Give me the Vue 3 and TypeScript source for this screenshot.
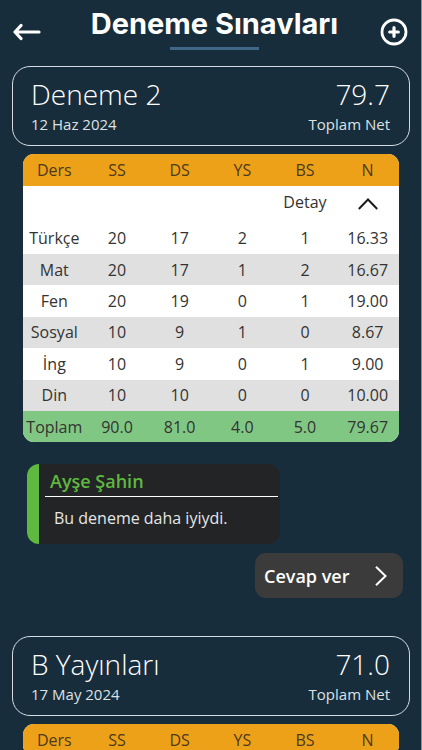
<script setup lang="ts">
import { ref } from 'vue'

interface Exam {
  id: number
  name: string
  date: string
  net: string
  rows: string[][]
  total: string[]
  comment?: { author: string; text: string }
}

const columns = ['Ders', 'SS', 'DS', 'YS', 'BS', 'N']

const exams: Exam[] = [
  {
    id: 1,
    name: 'Deneme 2',
    date: '12 Haz 2024',
    net: '79.7',
    rows: [
      ['Türkçe', '20', '17', '2', '1', '16.33'],
      ['Mat', '20', '17', '1', '2', '16.67'],
      ['Fen', '20', '19', '0', '1', '19.00'],
      ['Sosyal', '10', '9', '1', '0', '8.67'],
      ['İng', '10', '9', '0', '1', '9.00'],
      ['Din', '10', '10', '0', '0', '10.00'],
    ],
    total: ['Toplam', '90.0', '81.0', '4.0', '5.0', '79.67'],
    comment: { author: 'Ayşe Şahin', text: 'Bu deneme daha iyiydi.' },
  },
  { id: 2, name: 'B Yayınları', date: '17 May 2024', net: '71.0', rows: [], total: [] },
]

const open = ref(true)
</script>

<template>
  <div class="screen">
    <header class="bar">
      <button class="icon-button" type="button" aria-label="Geri">
        <svg width="28" height="18" viewBox="0 0 28 18" fill="none" stroke="#fff" stroke-width="3.200" stroke-linecap="round" stroke-linejoin="round">
          <path d="M26 9H2.500M8 2.500L2 9l6 6.500" />
        </svg>
      </button>
      <h1 class="title">Deneme Sınavları</h1>
      <button class="icon-button end" type="button" aria-label="Ekle">
        <svg width="28" height="28" viewBox="0 0 28 28" fill="none" stroke="#fff" stroke-linecap="round">
          <circle cx="14" cy="14" r="12" stroke-width="2.800" />
          <path d="M14 9.700v8.600M9.700 14h8.600" stroke-width="3.200" />
        </svg>
      </button>
    </header>

    <main class="list">
      <article v-for="exam in exams" :key="exam.id" class="exam">
        <section class="card">
          <div>
            <h2 class="big">{{ exam.name }}</h2>
            <p class="small">{{ exam.date }}</p>
          </div>
          <div class="right">
            <p class="big">{{ exam.net }}</p>
            <p class="small">Toplam Net</p>
          </div>
        </section>

        <div class="table-wrap">
          <table class="results" :class="{ full: exam.rows.length && open }">
            <thead>
              <tr>
                <th v-for="c in columns" :key="c" scope="col">{{ c }}</th>
              </tr>
            </thead>
            <tbody v-if="exam.rows.length">
              <tr class="detail">
                <td colspan="4"></td>
                <td>Detay</td>
                <td>
                  <button class="toggle" type="button" aria-label="Detay" :aria-expanded="open" @click="open = !open">
                    <svg width="20" height="12" viewBox="0 0 20 12" fill="none" stroke="#1c1c1c" stroke-width="2">
                      <path :d="open ? 'M.8 11L10 1.500 19.200 11' : 'M.8 1L10 10.500 19.200 1'" />
                    </svg>
                  </button>
                </td>
              </tr>
              <template v-if="open">
                <tr v-for="(row, i) in exam.rows" :key="row[0]" :class="{ shaded: i % 2 === 1 }">
                  <td v-for="(cell, j) in row" :key="j">{{ cell }}</td>
                </tr>
              </template>
            </tbody>
            <tfoot v-if="exam.total.length">
              <tr>
                <td v-for="(cell, j) in exam.total" :key="j">{{ cell }}</td>
              </tr>
            </tfoot>
          </table>
        </div>

        <template v-if="exam.comment">
          <section class="comment">
            <h3 class="author">{{ exam.comment.author }}</h3>
            <p class="message">{{ exam.comment.text }}</p>
          </section>
          <button class="reply" type="button">
            <span>Cevap ver</span>
            <svg width="12" height="20" viewBox="0 0 12 20" fill="none" stroke="#fff" stroke-width="2">
              <path d="M1 .8L10.500 10 1 19.200" />
            </svg>
          </button>
        </template>
      </article>
    </main>
  </div>
</template>

<style>
body {
  background: #182d3b;
}
</style>

<style scoped>
.screen {
  box-sizing: border-box;
  height: 100vh;
  display: flex;
  flex-direction: column;
  border-right: 1px solid #7d93a6;
  background: #182d3b;
  color: #fff;
  font-family: "Open Sans", "Noto Sans", sans-serif;
}
h1, h2, h3, p {
  margin: 0;
}
button {
  font: inherit;
  color: inherit;
  border: 0;
  padding: 0;
  background: none;
  cursor: pointer;
}
.bar {
  display: grid;
  grid-template-columns: 56px 1fr 48px;
  height: 66px;
  padding: 0 13px;
  box-sizing: border-box;
  flex-shrink: 0;
}
.icon-button {
  display: flex;
  align-items: center;
  height: 64px;
}
.end {
  justify-content: flex-end;
}
.title {
  display: flex;
  flex-direction: column;
  align-items: center;
  font-family: Inter, "Open Sans", sans-serif;
  font-size: 29px;
  font-weight: 700;
  line-height: 47px;
  white-space: nowrap;
}
.title::after {
  content: "";
  width: 89px;
  height: 3px;
  background: #406688;
}
.list {
  flex: 1;
  min-height: 0;
  overflow-y: auto;
  scrollbar-width: none;
}
.exam {
  display: flex;
  flex-direction: column;
  padding: 0 11px 38px 12px;
}
.card {
  display: flex;
  justify-content: space-between;
  box-sizing: border-box;
  height: 80px;
  padding: 9px 19px 0 18px;
  border: 1px solid #d5dde3;
  border-radius: 18px;
}
.right {
  text-align: right;
}
.big {
  font-size: 28px;
  font-weight: 300;
  line-height: 37px;
}
.small {
  font-size: 15px;
  line-height: 22px;
  color: #dce1e5;
}
.table-wrap {
  margin: 8px 11px 0;
  border-radius: 11px;
  overflow: hidden;
}
.results {
  width: 100%;
  table-layout: fixed;
  border-collapse: collapse;
  background: #fff;
  color: #333;
  font-size: 16px;
  line-height: 20px;
  text-align: center;
}
.full {
  height: 288px;
}
.results th,
.results td {
  height: 31px;
  padding: 0;
  font-weight: 400;
  white-space: nowrap;
}
.results th {
  height: 32px;
  background: #eda119;
  color: #4b3a1d;
}
.results .detail td {
  height: 32px;
  padding-bottom: 4px;
}
.toggle {
  display: inline-flex;
  vertical-align: middle;
}
.shaded {
  background: #e0e0e0;
}
.results tfoot td {
  background: #81c784;
}
.comment {
  align-self: flex-start;
  box-sizing: border-box;
  width: 253px;
  height: 80px;
  margin: 22px 0 0 15px;
  padding: 3px 2px 0 6px;
  border-left: 12px solid #5fb840;
  border-radius: 12px;
  background: #232426;
}
.author {
  padding-left: 5px;
  border-bottom: 1px solid #fff;
  color: #5fb840;
  font-size: 18px;
  font-weight: 600;
  line-height: 29px;
}
.message {
  padding: 8px 9px 0;
  font-size: 16px;
  line-height: 26px;
  color: #e6e6e6;
}
.reply {
  align-self: flex-end;
  display: flex;
  align-items: center;
  justify-content: space-between;
  width: 148px;
  height: 45px;
  margin: 9px 7px 0 0;
  padding: 0 16px 0 9px;
  border-radius: 11px;
  background: #3b3b3b;
  font-size: 18px;
  font-weight: 600;
}
</style>
